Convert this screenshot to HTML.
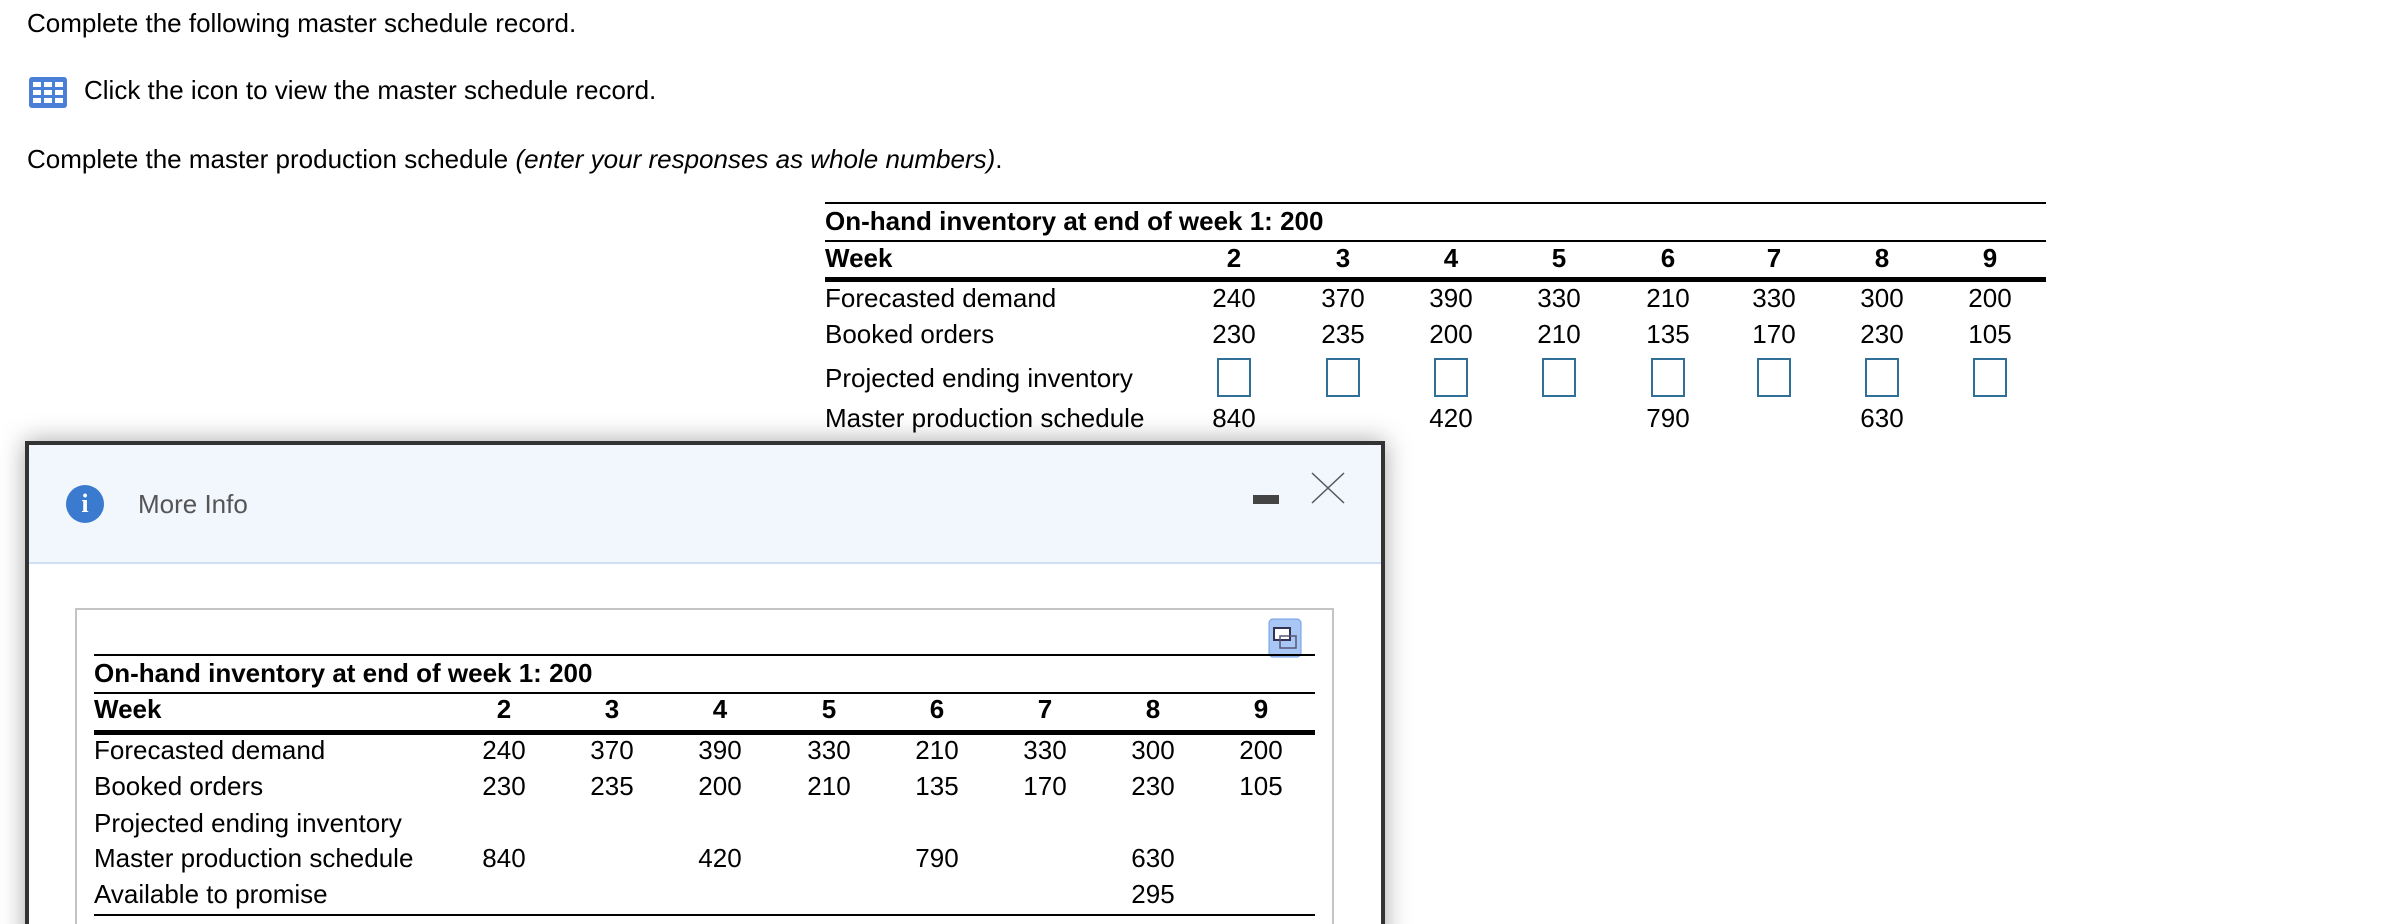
<!DOCTYPE html>
<html><head><meta charset="utf-8"><style>
html,body{margin:0;width:2406px;height:924px;overflow:hidden}
#w{position:relative;width:2406px;height:924px;overflow:hidden;background:#fff;font-family:"Liberation Sans",Arial,sans-serif;color:#000}
.t{position:absolute;font-size:26px;line-height:24px;white-space:nowrap}
.c{position:absolute;width:100px;text-align:center;font-size:26px;line-height:24px}
.b{font-weight:bold}
.r{position:absolute;background:#000}
.box{position:absolute;width:30px;height:35px;border:2px solid #2f6f98;background:#fff}
</style></head><body><div id="w">
<div class="t" style="left:27px;top:11px">Complete the following master schedule record.</div>
<svg style="position:absolute;left:29px;top:77px" width="38" height="31" viewBox="0 0 38 31">
<rect x="0" y="0" width="38" height="31" rx="3" fill="#4a7fd8"/>
<g fill="#fff">
<rect x="4" y="5" width="8" height="5"/><rect x="15" y="5" width="8" height="5"/><rect x="26" y="5" width="8" height="5"/>
<rect x="4" y="13" width="8" height="5"/><rect x="15" y="13" width="8" height="5"/><rect x="26" y="13" width="8" height="5"/>
<rect x="4" y="21" width="8" height="5"/><rect x="15" y="21" width="8" height="5"/><rect x="26" y="21" width="8" height="5"/>
</g></svg>
<div class="t" style="left:84px;top:78px">Click the icon to view the master schedule record.</div>
<div class="t" style="left:27px;top:147px">Complete the master production schedule <i>(enter your responses as whole numbers)</i>.</div>

<div class="r" style="left:825px;top:202px;width:1221px;height:2px"></div>
<div class="t b" style="left:825px;top:209px">On-hand inventory at end of week 1: 200</div>
<div class="r" style="left:825px;top:240px;width:1221px;height:2px"></div>
<div class="t b" style="left:825px;top:246px">Week</div>
<div class="r" style="left:825px;top:277px;width:1221px;height:5px"></div>
<div class="t" style="left:825px;top:286px">Forecasted demand</div>
<div class="t" style="left:825px;top:322px">Booked orders</div>
<div class="t" style="left:825px;top:366px">Projected ending inventory</div>
<div class="t" style="left:825px;top:406px">Master production schedule</div>
<div id="m"></div>

<div style="position:absolute;left:25px;top:441px;width:1352px;height:600px;border:4px solid #333;background:#fff;box-shadow:0 0 24px rgba(0,0,0,.35)"></div>
<div style="position:absolute;left:29px;top:445px;width:1352px;height:117px;background:#f2f6fd;border-bottom:2px solid #cfe0f5"></div>
<div style="position:absolute;left:66px;top:485px;width:38px;height:38px;border-radius:50%;background:#3a7bd0;color:#fff;font:bold 26px/38px 'Liberation Serif',serif;text-align:center">i</div>
<div class="t" style="left:138px;top:492px;color:#555">More Info</div>
<div style="position:absolute;left:1253px;top:495px;width:26px;height:9px;background:#444"></div>
<svg style="position:absolute;left:1310px;top:472px" width="36" height="32"><path d="M2 1 L34 31 M34 1 L2 31" stroke="#555" stroke-width="1.5" fill="none"/></svg>
<div style="position:absolute;left:75px;top:608px;width:1255px;height:500px;border:2px solid #c4c4c4;background:#fff"></div>
<svg style="position:absolute;left:1268px;top:618px" width="34" height="40"><rect x="1" y="1" width="32" height="38" rx="4" fill="#a9c7f5" stroke="#6e9ee8"/><rect x="6" y="10" width="16" height="12" fill="#fff" stroke="#335" stroke-width="2"/><rect x="12" y="18" width="16" height="12" fill="none" stroke="#557" stroke-width="1.5"/></svg>

<div class="r" style="left:94px;top:654px;width:1221px;height:2px"></div>
<div class="t b" style="left:94px;top:661px">On-hand inventory at end of week 1: 200</div>
<div class="r" style="left:94px;top:692px;width:1221px;height:2px"></div>
<div class="t b" style="left:94px;top:697px">Week</div>
<div class="r" style="left:94px;top:730px;width:1221px;height:5px"></div>
<div class="t" style="left:94px;top:738px">Forecasted demand</div>
<div class="t" style="left:94px;top:774px">Booked orders</div>
<div class="t" style="left:94px;top:811px">Projected ending inventory</div>
<div class="t" style="left:94px;top:846px">Master production schedule</div>
<div class="t" style="left:94px;top:882px">Available to promise</div>
<div class="r" style="left:94px;top:914px;width:1221px;height:2px"></div>
<div id="n"></div>
</div>
<script>
function add(cx,cols,rows){var h='';rows.forEach(function(r){cols.forEach(function(x,i){var v=r.v[i];if(v===undefined||v==='')return;
if(v==='BOX'){h+='<div class="box" style="left:'+(x-17)+'px;top:'+r.top+'px"></div>';}
else h+='<div class="c'+(r.b?' b':'')+'" style="left:'+(x-50)+'px;top:'+r.top+'px">'+v+'</div>';});});cx.outerHTML=h;}
var W=['2','3','4','5','6','7','8','9'],F=['240','370','390','330','210','330','300','200'],B=['230','235','200','210','135','170','230','105'],M=['840','','420','','790','','630',''];
add(document.getElementById('m'),[1234,1343,1451,1559,1668,1774,1882,1990],[
{top:246,v:W,b:1},{top:286,v:F},{top:322,v:B},{top:358,v:['BOX','BOX','BOX','BOX','BOX','BOX','BOX','BOX']},{top:406,v:M}]);
add(document.getElementById('n'),[504,612,720,829,937,1045,1153,1261],[
{top:697,v:W,b:1},{top:738,v:F},{top:774,v:B},{top:846,v:M},{top:882,v:['','','','','','','295','']}]);
</script>
</body></html>
